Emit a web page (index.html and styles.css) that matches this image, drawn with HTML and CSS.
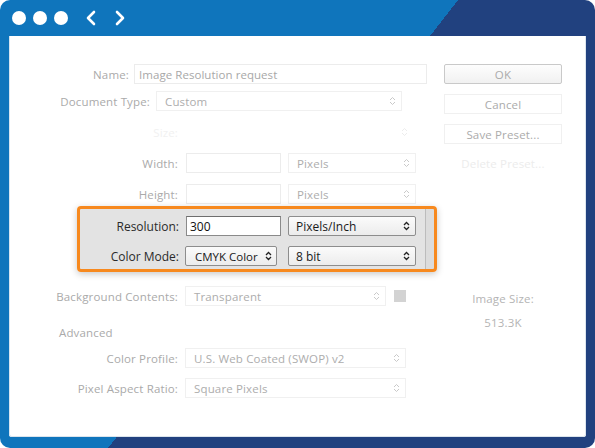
FILE: index.html
```html
<!DOCTYPE html>
<html>
<head>
<meta charset="utf-8">
<link rel="stylesheet" href="styles.css">
</head>
<body>
<div class="frame">
  <div class="titlebar">
    <span class="dot"></span><span class="dot"></span><span class="dot"></span>
    <svg class="chev" width="12" height="16" viewBox="0 0 12 16"><polyline points="9,2 3,8 9,14" fill="none" stroke="#fff" stroke-width="2.6" stroke-linecap="round" stroke-linejoin="round"/></svg>
    <svg class="chev chev2" width="12" height="16" viewBox="0 0 12 16"><polyline points="3,2 9,8 3,14" fill="none" stroke="#fff" stroke-width="2.6" stroke-linecap="round" stroke-linejoin="round"/></svg>
  </div>
  <div class="panel">
    <div class="left">
      <div class="row r-name">
        <span class="lbl w120">Name:</span>
        <span class="field dis w293">Image Resolution request</span>
      </div>
      <div class="row r-doc">
        <span class="lbl w141">Document Type:</span>
        <span class="sel dis w246"><span class="val">Custom</span><svg class="arr" width="7" height="10" viewBox="0 0 7 10"><path d="M1 4 L3.5 1.5 L6 4 M1 6 L3.5 8.5 L6 6" fill="none" stroke="#c9c9c9" stroke-width="1"/></svg></span>
      </div>
      <div class="row r-size">
        <span class="lbl w169 ghost">Size:</span>
        <span class="sel ghostsel w229"><span class="val"></span><svg class="arr" width="7" height="10" viewBox="0 0 7 10"><path d="M1 4 L3.5 1.5 L6 4 M1 6 L3.5 8.5 L6 6" fill="none" stroke="#ececec" stroke-width="1"/></svg></span>
      </div>
      <div class="row r-gap11">
        <span class="lbl w169">Width:</span>
        <span class="field dis w95 g8"></span>
        <span class="sel dis w128 g7"><span class="val">Pixels</span><svg class="arr" width="7" height="10" viewBox="0 0 7 10"><path d="M1 4 L3.5 1.5 L6 4 M1 6 L3.5 8.5 L6 6" fill="none" stroke="#c9c9c9" stroke-width="1"/></svg></span>
      </div>
      <div class="row r-gap11">
        <span class="lbl w169">Height:</span>
        <span class="field dis w95 g8"></span>
        <span class="sel dis w128 g7"><span class="val">Pixels</span><svg class="arr" width="7" height="10" viewBox="0 0 7 10"><path d="M1 4 L3.5 1.5 L6 4 M1 6 L3.5 8.5 L6 6" fill="none" stroke="#c9c9c9" stroke-width="1"/></svg></span>
      </div>
      <div class="hilite">
        <div class="row">
          <span class="lbl dark w99">Resolution:</span>
          <span class="field act w95 g7">300</span>
          <span class="sel act w128 g7"><span class="val">Pixels/Inch</span><svg class="arr" width="7" height="10" viewBox="0 0 7 10"><path d="M1 4 L3.5 1.5 L6 4 M1 6 L3.5 8.5 L6 6" fill="none" stroke="#222" stroke-width="1.3"/></svg></span>
        </div>
        <div class="row r-box2">
          <span class="lbl dark w99">Color Mode:</span>
          <span class="sel act cmyk w92 g6"><span class="val">CMYK Color</span><svg class="arr" width="7" height="10" viewBox="0 0 7 10"><path d="M1 4 L3.5 1.5 L6 4 M1 6 L3.5 8.5 L6 6" fill="none" stroke="#222" stroke-width="1.3"/></svg></span>
          <span class="sel act w128 g11"><span class="val">8 bit</span><svg class="arr" width="7" height="10" viewBox="0 0 7 10"><path d="M1 4 L3.5 1.5 L6 4 M1 6 L3.5 8.5 L6 6" fill="none" stroke="#222" stroke-width="1.3"/></svg></span>
        </div>
      </div>
      <div class="row r-bg">
        <span class="lbl w169">Background Contents:</span>
        <span class="sel dis w201 g7"><span class="val">Transparent</span><svg class="arr" width="7" height="10" viewBox="0 0 7 10"><path d="M1 4 L3.5 1.5 L6 4 M1 6 L3.5 8.5 L6 6" fill="none" stroke="#c9c9c9" stroke-width="1"/></svg></span>
        <span class="swatch"></span>
      </div>
      <div class="row r-adv">
        <span class="adv">Advanced</span>
      </div>
      <div class="row r-cp">
        <span class="lbl w169">Color Profile:</span>
        <span class="sel dis w221 g7"><span class="val">U.S. Web Coated (SWOP) v2</span><svg class="arr" width="7" height="10" viewBox="0 0 7 10"><path d="M1 4 L3.5 1.5 L6 4 M1 6 L3.5 8.5 L6 6" fill="none" stroke="#c9c9c9" stroke-width="1"/></svg></span>
      </div>
      <div class="row r-par">
        <span class="lbl w169">Pixel Aspect Ratio:</span>
        <span class="sel dis w221 g7"><span class="val">Square Pixels</span><svg class="arr" width="7" height="10" viewBox="0 0 7 10"><path d="M1 4 L3.5 1.5 L6 4 M1 6 L3.5 8.5 L6 6" fill="none" stroke="#c9c9c9" stroke-width="1"/></svg></span>
      </div>
    </div>
    <div class="right">
      <div class="btn ok">OK</div>
      <div class="btn faint">Cancel</div>
      <div class="btn faint">Save Preset...</div>
      <div class="btn ghostbtn">Delete Preset...</div>
      <div class="info info1">Image Size:</div>
      <div class="info info2">513.3K</div>
    </div>
  </div>
</div>
</body>
</html>
```

FILE: styles.css
```css
html, body {
  margin: 0;
  padding: 0;
  background: #fff;
}
body {
  font-family: "Open Sans", "Noto Sans", sans-serif;
  font-size: 11.5px;
  letter-spacing: 0.15px;
}
.frame {
  width: 595px;
  height: 448px;
  box-sizing: border-box;
  border-radius: 10px;
  background: linear-gradient(128deg, #0f75bc 361px, #21417f 361px);
  padding: 0 9px 11px 9px;
  display: flex;
  flex-direction: column;
}
.titlebar {
  height: 36px;
  display: flex;
  align-items: center;
  padding-left: 3px;
}
.dot {
  width: 14px;
  height: 14px;
  border-radius: 50%;
  background: #fff;
  margin-right: 7px;
}
.chev {
  margin-left: 10px;
}
.chev2 {
  margin-left: 17px;
}
.panel {
  flex: 1;
  background: #fff;
  border-radius: 0 0 3px 3px;
  box-shadow: inset 1px 0 0 #d6e5f1, inset -1px 0 0 #dde6ee, inset 0 -1px 0 #dbe4ec;
  display: flex;
}
.left {
  width: 428px;
  padding-top: 28px;
  display: flex;
  flex-direction: column;
}
.row {
  display: flex;
  align-items: center;
  height: 20px;
  flex-shrink: 0;
}
.r-doc { margin-top: 7px; }
.r-size { margin-top: 11px; }
.r-gap11 { margin-top: 11px; }
.r-box2 { margin-top: 10px; }
.r-bg { margin-top: 14px; }
.r-adv { margin-top: 16px; }
.r-cp { margin-top: 6px; }
.r-par { margin-top: 10px; }
.lbl {
  text-align: right;
  color: #aaaaaa;
  white-space: nowrap;
  flex-shrink: 0;
}
.lbl.dark { color: #2a2a2a; font-size: 12px; letter-spacing: 0; }
.lbl.ghost { color: #f1f1f1; }
.w92 { width: 92px; }
.w95 { width: 95px; }
.w99 { width: 99px; }
.w120 { width: 120px; margin-right: 5px; }
.w128 { width: 128px; }
.w141 { width: 141px; margin-right: 6px; }
.w169 { width: 169px; }
.w201 { width: 201px; }
.w221 { width: 221px; }
.w229 { width: 229px; }
.w246 { width: 246px; }
.w293 { width: 293px; }
.g6 { margin-left: 6px; }
.g7 { margin-left: 7px; }
.g8 { margin-left: 8px; }
.g11 { margin-left: 11px; }
.field, .sel {
  box-sizing: border-box;
  height: 20px;
  display: flex;
  align-items: center;
  white-space: nowrap;
  flex-shrink: 0;
}
.field.dis {
  border: 1px solid #ececec;
  color: #a8a8a8;
  padding-left: 4px;
  letter-spacing: 0.05px;
}
.r-size .sel { margin-left: 7px; }
.sel {
  justify-content: space-between;
  padding: 0 5px 0 8px;
}
.sel.dis {
  border: 1px solid #f0f0f0;
  color: #adadad;
}
.sel.ghostsel {
  border: 1px solid transparent;
}
.hilite {
  margin-top: 2px;
  margin-left: 68px;
  width: 360px;
  height: 66px;
  box-sizing: border-box;
  border: 3px solid #f7891e;
  border-radius: 4px;
  padding-top: 7px;
  background: linear-gradient(to right, #e3e3e3 345px, #bcbcbc 345px, #bcbcbc 346px, #dcdcdc 346px);
  box-shadow: 0 2px 7px rgba(0,0,0,0.22);
  display: flex;
  flex-direction: column;
}
.field.act {
  background: #fff;
  border: 1px solid #8a8a8a;
  border-top-color: #6e6e6e;
  color: #111;
  padding-left: 3px;
  font-size: 12px;
  letter-spacing: 0;
}
.sel.act {
  background: linear-gradient(#fbfbfb, #ececec);
  border: 1px solid #8d8d8d;
  border-radius: 2px;
  color: #1a1a1a;
  font-size: 12px;
  letter-spacing: 0;
  padding-left: 7px;
  padding-right: 5px;
}
.sel.act.cmyk {
  font-size: 11.5px;
  padding-left: 9px;
  padding-right: 4px;
}
.swatch {
  width: 12px;
  height: 12px;
  background: #d3d3d3;
  margin-left: 8px;
  flex-shrink: 0;
}
.adv {
  padding-left: 50px;
  color: #aaaaaa;
}
.right {
  width: 118px;
  margin-left: 7px;
  padding-top: 28px;
  display: flex;
  flex-direction: column;
}
.btn {
  height: 20px;
  box-sizing: border-box;
  display: flex;
  align-items: center;
  justify-content: center;
  color: #ababab;
  flex-shrink: 0;
}
.btn.ok {
  border: 1px solid #c9c9c9;
  border-radius: 2px;
  background: linear-gradient(#fdfdfd, #f1f1f1);
}
.btn.faint {
  border: 1px solid #f0f0f0;
  margin-top: 10px;
}
.btn.ghostbtn {
  margin-top: 9px;
  color: #ececec;
}
.info {
  height: 20px;
  display: flex;
  align-items: center;
  justify-content: center;
  color: #b4b4b4;
}
.info1 { margin-top: 115px; }
.info2 { margin-top: 4px; }
```
